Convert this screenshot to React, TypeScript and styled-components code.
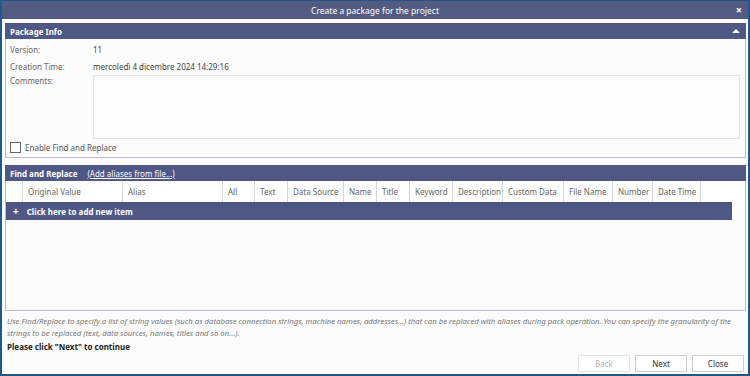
import React from "react";
import styled, { createGlobalStyle } from "styled-components";

const Global = createGlobalStyle`
  html, body { margin: 0; padding: 0; background: #fcfcfc; }
  body { font-family: "Noto Sans", "Open Sans", sans-serif; }
`;

const Window = styled.div`
  width: 750px;
  height: 376px;
  box-sizing: border-box;
  border: 2px solid #1c5a8e;
  border-top-width: 1px;
  background: #fcfcfc;
  display: flex;
  flex-direction: column;
  overflow: hidden;
`;

const TitleBar = styled.div`
  height: 18px;
  flex: none;
  background: #545b83;
  color: #fff;
  font-size: 8.5px;
  display: flex;
  align-items: center;
  justify-content: center;
  position: relative;
`;

const CloseX = styled.span`
  position: absolute;
  right: 6px;
  top: 3px;
  font-size: 11px;
  font-weight: bold;
  line-height: 12px;
`;

const Content = styled.div`
  flex: 1;
  padding: 4px 2px 0 3px;
  display: flex;
  flex-direction: column;
`;

const PanelHeader = styled.div`
  height: 16px;
  background: #4f5785;
  color: #fff;
  font-size: 8px;
  font-weight: bold;
  display: flex;
  align-items: center;
  padding: 0 5px;
  gap: 10px;
`;

const Caret = styled.span`
  margin-left: auto;
  width: 0;
  height: 0;
  border-left: 4px solid transparent;
  border-right: 4px solid transparent;
  border-bottom: 4px solid #fff;
  margin-right: 1px;
`;

const HeaderLink = styled.span`
  font-weight: normal;
  text-decoration: underline;
`;

const PanelBody = styled.div<{ $h: number }>`
  height: ${(p) => p.$h}px;
  box-sizing: border-box;
  border: 1px solid #b9bccc;
  border-top: none;
  background: #fcfcfc;
`;

const InfoBody = styled(PanelBody)`
  padding: 2px 5px 0 4px;
  display: flex;
  flex-direction: column;
`;

const Row = styled.div`
  display: flex;
  font-size: 8px;
  color: #444;
  height: 17px;
  align-items: center;
`;

const Label = styled.div`
  width: 83px;
  color: #666;
`;

const CommentsRow = styled.div`
  display: flex;
  font-size: 8px;
  color: #666;
`;

const TextArea = styled.div`
  flex: 1;
  height: 64px;
  box-sizing: border-box;
  border: 1px solid #e6e6e6;
  background: #fdfdfd;
`;

const CheckRow = styled.div`
  display: flex;
  align-items: center;
  gap: 4px;
  margin-top: 3px;
  font-size: 8px;
  color: #555;
`;

const Box = styled.span`
  width: 9px;
  height: 9px;
  border: 1px solid #666;
  background: #fff;
`;

const Grid = styled.div`
  display: flex;
  height: 21px;
  background: #fff;
`;

const Col = styled.div<{ $w: number }>`
  width: ${(p) => p.$w}px;
  flex: none;
  box-sizing: border-box;
  border-right: 1px solid #d4d6de;
  font-size: 8px;
  color: #666;
  display: flex;
  align-items: center;
  padding-left: 5px;
  white-space: nowrap;
`;

const AddRow = styled.div`
  width: 726px;
  height: 18px;
  background: #4f5785;
  color: #fff;
  font-size: 8px;
  font-weight: bold;
  display: flex;
  align-items: center;
  padding-left: 7px;
  box-sizing: border-box;
  gap: 8px;
`;

const Plus = styled.span`
  font-size: 10px;
`;

const Note = styled.div`
  margin-top: 4px;
  font-size: 7.75px;
  font-style: italic;
  color: #777;
  line-height: 12px;
  padding-left: 2px;
  max-width: 728px;
`;

const NextHint = styled.div`
  margin-top: 2px;
  font-size: 8px;
  font-weight: bold;
  color: #222;
  padding-left: 2px;
`;

const Footer = styled.div`
  display: flex;
  justify-content: flex-end;
  gap: 5px;
  margin-top: auto;
  margin-bottom: 2px;
  padding-right: 2px;
`;

const Button = styled.div<{ $disabled?: boolean }>`
  width: 52px;
  height: 17px;
  box-sizing: border-box;
  border: 1px solid ${(p) => (p.$disabled ? "#e4e4e4" : "#cfcfcf")};
  background: #fff;
  color: ${(p) => (p.$disabled ? "#b5b5b5" : "#333")};
  font-size: 8px;
  display: flex;
  align-items: center;
  justify-content: center;
`;

const Spacer = styled.div`
  height: 7px;
  flex: none;
`;

const cols: [string, number][] = [
  ["", 17],
  ["Original Value", 100],
  ["Alias", 100],
  ["All", 32],
  ["Text", 33],
  ["Data Source", 56],
  ["Name", 33],
  ["Title", 33],
  ["Keyword", 43],
  ["Description", 50],
  ["Custom Data", 61],
  ["File Name", 49],
  ["Number", 40],
  ["Date Time", 48],
];

export default function App() {
  return (
    <>
      <Global />
      <Window>
        <TitleBar>
          Create a package for the project
          <CloseX>×</CloseX>
        </TitleBar>
        <Content>
          <PanelHeader>
            Package Info
            <Caret />
          </PanelHeader>
          <InfoBody $h={119}>
            <Row>
              <Label>Version:</Label>11
            </Row>
            <Row>
              <Label>Creation Time:</Label>mercoledì 4 dicembre 2024 14:29:16
            </Row>
            <CommentsRow>
              <Label>Comments:</Label>
              <TextArea />
            </CommentsRow>
            <CheckRow>
              <Box />
              Enable Find and Replace
            </CheckRow>
          </InfoBody>
          <Spacer />
          <PanelHeader>
            Find and Replace
            <HeaderLink>(Add aliases from file...)</HeaderLink>
          </PanelHeader>
          <PanelBody $h={130}>
            <Grid>
              {cols.map(([t, w], i) => (
                <Col key={i} $w={w}>
                  {t}
                </Col>
              ))}
            </Grid>
            <AddRow>
              <Plus>+</Plus>
              Click here to add new item
            </AddRow>
          </PanelBody>
          <Note>
            Use Find/Replace to specify a list of string values (such as database connection strings, machine names, addresses...) that can be replaced with aliases during pack operation. You can specify the granularity of the strings to be replaced (text, data sources, names, titles and so on...).
          </Note>
          <NextHint>Please click "Next" to continue</NextHint>
          <Footer>
            <Button $disabled>Back</Button>
            <Button>Next</Button>
            <Button>Close</Button>
          </Footer>
        </Content>
      </Window>
    </>
  );
}
